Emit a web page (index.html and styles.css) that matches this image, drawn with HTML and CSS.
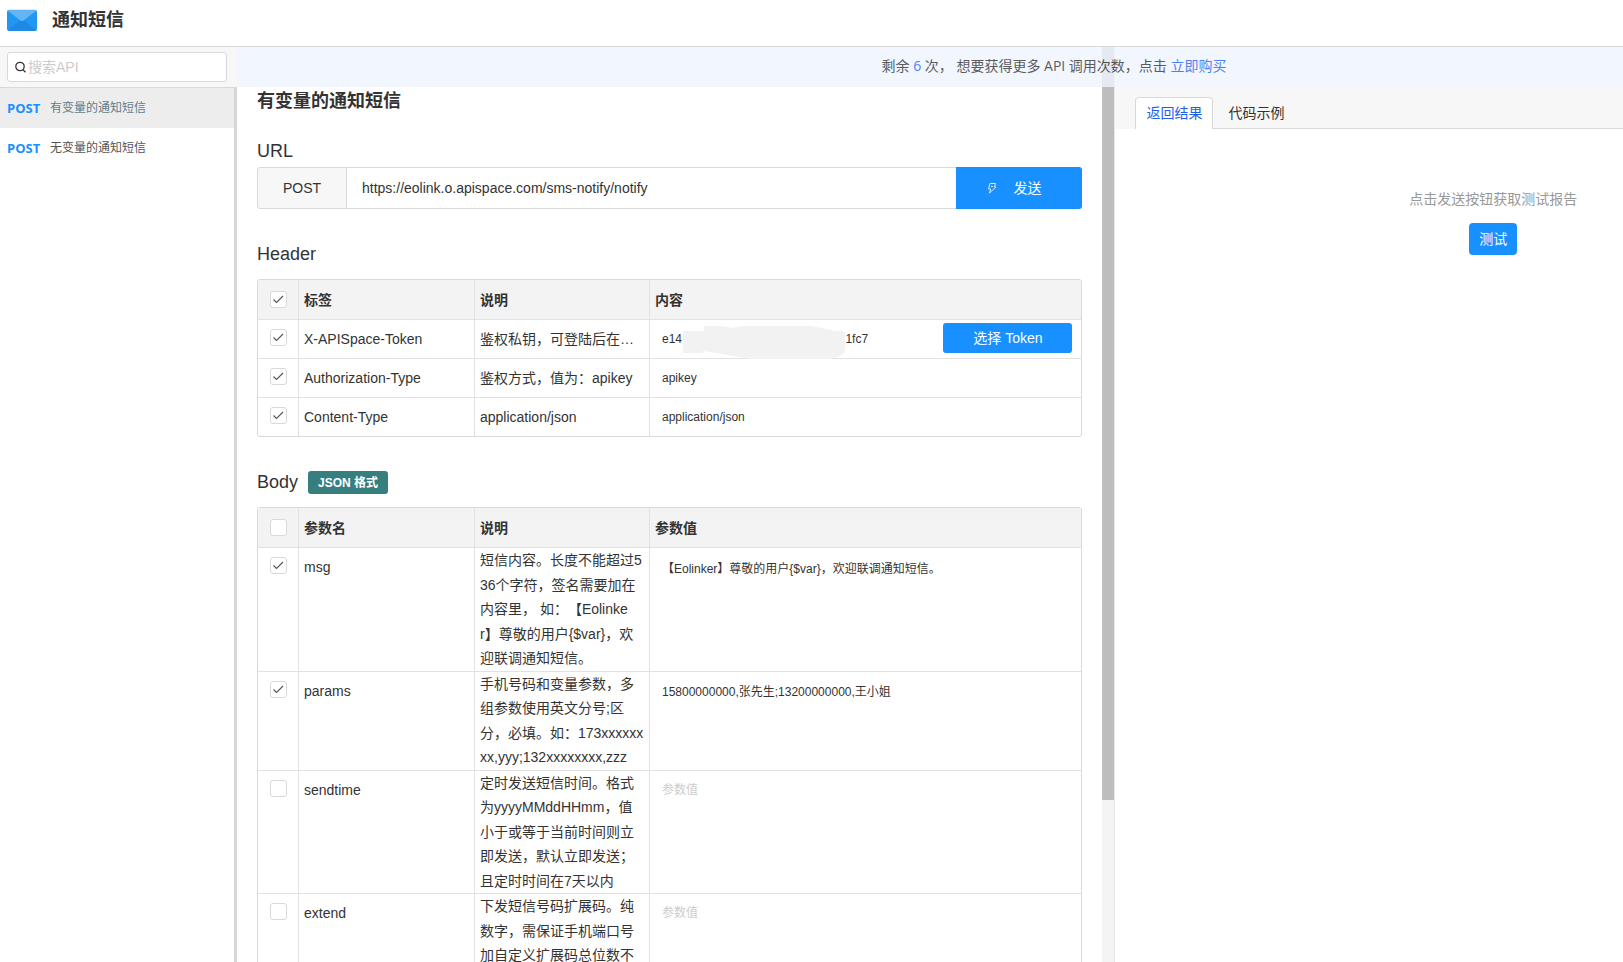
FILE: index.html
```html
<!DOCTYPE html>
<html lang="zh-CN">
<head>
<meta charset="utf-8">
<title>通知短信</title>
<link rel="stylesheet" href="styles.css">
</head>
<body>
<header class="topbar">
  <svg class="logo" width="30" height="22" viewBox="0 0 30 22" aria-hidden="true">
    <rect width="30" height="21" y="1" rx="2" fill="#2196f3"/>
    <path d="M1 21 15 10l14 11q-.4.8-1.500.8h-25Q1.400 21.800 1 21z" fill="#1e88e5"/>
    <path d="M.5 1.500Q1 .7 2 .7h26q1 0 1.500.8L16.500 11.500q-1.500 1-3 0z" fill="#64b5f6"/>
  </svg>
  <h1 class="app-title">通知短信</h1>
</header>
<div class="layout">
  <aside class="sidebar">
    <div class="search">
      <label class="search-box">
        <svg width="11" height="12" viewBox="0 0 11 12" fill="none" stroke="#333" stroke-width="1.300" aria-hidden="true"><circle cx="5" cy="5.500" r="4.200"/><path d="m8 8.700 2.500 2.500"/></svg>
        <input class="search-input" type="text" placeholder="搜索API" aria-label="搜索API">
      </label>
    </div>
    <nav class="api-list">
      <a class="api-item active" href="#"><b class="method">POST</b><span>有变量的通知短信</span></a>
      <a class="api-item" href="#"><b class="method">POST</b><span>无变量的通知短信</span></a>
    </nav>
  </aside>
  <div class="workspace">
    <p class="notice">剩余 <a href="#">6</a> 次， 想要获得更多 API 调用次数，点击 <a href="#">立即购买</a></p>
    <main class="main">
      <div class="content">
        <h2 class="api-title">有变量的通知短信</h2>
        <h3 class="section-title">URL</h3>
        <form class="url-bar">
          <span class="url-method">POST</span>
          <input class="url-input" type="text" aria-label="URL" value="https://eolink.o.apispace.com/sms-notify/notify">
          <button class="send" type="button">
            <svg width="10" height="12" viewBox="0 0 10 12" fill="none" stroke="#fff" stroke-opacity=".8" aria-hidden="true"><path d="M3 1.500h5.500L7.500 5H9L2.500 11l1.200-4H1.500z"/><path d="M4 4.500h2"/></svg>
            <span>发送</span>
          </button>
        </form>
        <h3 class="section-title">Header</h3>
        <div class="table-box">
          <table class="params">
            <colgroup><col class="c-check"><col class="c-name"><col class="c-desc"><col></colgroup>
            <thead>
              <tr><th><input type="checkbox" aria-label="全选" checked></th><th>标签</th><th>说明</th><th>内容</th></tr>
            </thead>
            <tbody>
              <tr>
                <td><input type="checkbox" aria-label="X-APISpace-Token" checked></td>
                <td class="name">X-APISpace-Token</td>
                <td class="desc single">鉴权私钥，可登陆后在管理后台获取</td>
                <td>
                  <div class="token">
                    <input class="value" type="text" aria-label="X-APISpace-Token 内容" value="e14&nbsp;&nbsp;&nbsp;&nbsp;&nbsp;&nbsp;&nbsp;&nbsp;&nbsp;&nbsp;&nbsp;&nbsp;&nbsp;&nbsp;&nbsp;&nbsp;&nbsp;&nbsp;&nbsp;&nbsp;&nbsp;&nbsp;&nbsp;&nbsp;&nbsp;&nbsp;&nbsp;&nbsp;&nbsp;&nbsp;&nbsp;&nbsp;&nbsp;&nbsp;&nbsp;&nbsp;&nbsp;&nbsp;&nbsp;&nbsp;&nbsp;&nbsp;&nbsp;&nbsp;&nbsp;&nbsp;&nbsp;&nbsp;&nbsp;1fc7">
                    <svg class="mask" width="162" height="33" viewBox="0 0 162 33" aria-hidden="true"><path fill="#f2f2f2" d="M0 5h21V0h18l10 2 13-2h66l15 3 9 2h8l2 2v19l-5 4-9 3H67l-17-3-17-3-13-2v2H0z"/></svg>
                    <button class="pick" type="button">选择 Token</button>
                  </div>
                </td>
              </tr>
              <tr>
                <td><input type="checkbox" aria-label="Authorization-Type" checked></td>
                <td class="name">Authorization-Type</td>
                <td class="desc single">鉴权方式，值为：apikey</td>
                <td><input class="value" type="text" aria-label="Authorization-Type 内容" value="apikey"></td>
              </tr>
              <tr>
                <td><input type="checkbox" aria-label="Content-Type" checked></td>
                <td class="name">Content-Type</td>
                <td class="desc single">application/json</td>
                <td><input class="value" type="text" aria-label="Content-Type 内容" value="application/json"></td>
              </tr>
            </tbody>
          </table>
        </div>
        <h3 class="section-title">Body <span class="badge">JSON 格式</span></h3>
        <div class="table-box">
          <table class="params">
            <colgroup><col class="c-check"><col class="c-name"><col class="c-desc"><col></colgroup>
            <thead>
              <tr><th><input type="checkbox" aria-label="全选"></th><th>参数名</th><th>说明</th><th>参数值</th></tr>
            </thead>
            <tbody>
              <tr>
                <td><input type="checkbox" aria-label="msg" checked></td>
                <td class="name">msg</td>
                <td class="desc">短信内容。长度不能超过536个字符，签名需要加在内容里， 如：【Eolinker】尊敬的用户{$var}，欢迎联调通知短信。</td>
                <td><input class="value" type="text" aria-label="msg 参数值" value="【Eolinker】尊敬的用户{$var}，欢迎联调通知短信。"></td>
              </tr>
              <tr>
                <td><input type="checkbox" aria-label="params" checked></td>
                <td class="name">params</td>
                <td class="desc">手机号码和变量参数，多组参数使用英文分号;区分，必填。如：173xxxxxxxx,yyy;132xxxxxxxx,zzz</td>
                <td><input class="value" type="text" aria-label="params 参数值" value="15800000000,张先生;13200000000,王小姐"></td>
              </tr>
              <tr>
                <td><input type="checkbox" aria-label="sendtime"></td>
                <td class="name">sendtime</td>
                <td class="desc">定时发送短信时间。格式为yyyyMMddHHmm，值小于或等于当前时间则立即发送，默认立即发送；且定时时间在7天以内</td>
                <td><input class="value" type="text" aria-label="sendtime 参数值" placeholder="参数值"></td>
              </tr>
              <tr>
                <td><input type="checkbox" aria-label="extend"></td>
                <td class="name">extend</td>
                <td class="desc">下发短信号码扩展码。纯数字，需保证手机端口号加自定义扩展码总位数不超过20位</td>
                <td><input class="value" type="text" aria-label="extend 参数值" placeholder="参数值"></td>
              </tr>
            </tbody>
          </table>
        </div>
      </div>
      <div class="scrollbar"><div class="thumb"></div></div>
    </main>
    <section class="panel">
      <div class="tabs" role="tablist">
        <button class="tab selected" type="button" role="tab" aria-selected="true">返回结果</button>
        <button class="tab" type="button" role="tab" aria-selected="false">代码示例</button>
        <span class="tabs-rest"></span>
      </div>
      <div class="empty">
        <p class="empty-text">点击发送按钮获取测试报告</p>
        <button class="test" type="button">测试</button>
      </div>
    </section>
  </div>
</div>
</body>
</html>
```

FILE: styles.css
```css
* {
  box-sizing: border-box;
}

body {
  margin: 0;
  height: 100vh;
  display: flex;
  flex-direction: column;
  overflow: hidden;
  background: #fff;
  color: #333;
  font: 14px/20px "Liberation Sans", "Noto Sans CJK SC", sans-serif;
  text-spacing-trim: space-all;
}

h1,
h2,
h3,
p {
  margin: 0;
}

a {
  text-decoration: none;
}

button,
input {
  font: inherit;
  color: inherit;
  margin: 0;
}

button {
  border: 0;
  padding: 0;
}

.topbar {
  flex: none;
  display: flex;
  align-items: center;
  gap: 15px;
  height: 47px;
  padding: 0 7px 6px;
  border-bottom: 1px solid #d9d9d9;
}

.app-title {
  font-size: 18px;
  line-height: 24px;
}

.layout {
  flex: 1;
  min-height: 0;
  display: flex;
  overflow: hidden;
}

/* Sidebar */
.sidebar {
  flex: none;
  width: 237px;
  display: flex;
  flex-direction: column;
}

.search {
  height: 41px;
  padding: 5px 10px 5px 7px;
  background: #f7f7f7;
  border-bottom: 1px solid #d9d9d9;
}

.search-box {
  display: flex;
  align-items: center;
  gap: 2px;
  height: 30px;
  padding-left: 7px;
  background: #fff;
  border: 1px solid #d9d9d9;
  border-radius: 3px;
}

.search-input {
  flex: 1;
  min-width: 0;
  height: 28px;
  padding: 0;
  border: 0;
  outline: 0;
  background: none;
}

::placeholder {
  color: #ccc;
  opacity: 1;
}

.api-list {
  flex: 1;
  border-right: 3px solid #d6d6d6;
}

.api-item {
  display: flex;
  align-items: center;
  gap: 10px;
  height: 40px;
  padding-left: 7px;
  font-size: 12px;
  color: #555;
}

.api-item.active {
  background: #ededed;
  color: #607d8b;
}

.method {
  width: 33px;
  color: #1890ff;
  font-size: 13px;
  font-family: "Open Sans", "Noto Sans", sans-serif;
}

/* Workspace */
.workspace {
  position: relative;
  flex: none;
  display: flex;
  width: calc(100% + 11px);
}

.notice {
  position: absolute;
  top: 0;
  left: 0;
  right: 0;
  z-index: 1;
  padding: 9px 0 11px;
  background: #eff4ff;
  opacity: 0.8;
  text-align: center;
  font-family: "Open Sans", "Noto Sans CJK SC", sans-serif;
}

.notice a {
  color: #1d63f0;
}

.main {
  flex: 878 1 0;
  min-width: 0;
  display: flex;
  border-right: 1px solid #e8e8e8;
}

.content {
  flex: 1;
  min-width: 0;
  padding: 41px 20px 0;
  overflow: hidden;
}

.scrollbar {
  flex: none;
  width: 12px;
  background: #f4f4f4;
}

.thumb {
  height: 82.3%;
  background: #bdbdbd;
}

.api-title {
  font-size: 18px;
  line-height: 26px;
  margin-bottom: 24px;
}

.section-title {
  display: flex;
  align-items: center;
  gap: 10px;
  height: 26px;
  font-size: 18px;
  line-height: 26px;
  font-weight: 400;
}

.badge {
  padding: 2px 10px 1px;
  border-radius: 3px;
  background: #377f7e;
  color: #fff;
  font-size: 12px;
  line-height: 20px;
  font-weight: 700;
}

.url-bar {
  display: flex;
  height: 42px;
  margin: 3px 0 32px;
}

.url-method {
  width: 90px;
  line-height: 40px;
  text-align: center;
  background: #f7f7f7;
  border: 1px solid #d9d9d9;
  border-radius: 3px 0 0 3px;
}

.url-input {
  flex: 1;
  min-width: 0;
  padding: 0 15px;
  border: 1px solid #d9d9d9;
  border-width: 1px 0;
  outline: 0;
}

.send {
  display: flex;
  align-items: center;
  justify-content: center;
  gap: 16px;
  width: 126px;
  padding-right: 10px;
  background: #1890ff;
  color: #fff;
  border-radius: 0 3px 3px 0;
}

/* Parameter tables */
.table-box {
  margin: 12px 0 32px;
  border: 1px solid #d9d9d9;
  border-radius: 3px;
  overflow: hidden;
}

.params {
  width: 100%;
  table-layout: fixed;
  border-collapse: separate;
  border-spacing: 0;
}

.c-check {
  width: 41px;
}

.c-name {
  width: 176px;
}

.c-desc {
  width: 175px;
}

.params th {
  height: 40px;
  padding: 0 5px;
  background: #f3f3f3;
  border: 0 solid #e2e2e2;
  border-width: 0 1px 1px 0;
  text-align: left;
  vertical-align: middle;
}

.params td {
  height: 39px;
  padding: 0;
  border: 0 solid #e2e2e2;
  border-width: 0 1px 1px 0;
  vertical-align: top;
}

.params th:last-child,
.params td:last-child {
  border-right: 0;
}

.params tr:last-child td {
  height: 38px;
  border-bottom: 0;
}

.params th:first-child {
  padding: 0 12px;
}

.params td:first-child {
  padding: 9px 12px 0;
}

.params .name {
  padding: 0 5px;
  line-height: 38px;
}

.params .desc {
  padding: 0 5px;
  line-height: 1.75;
  word-break: break-all;
}

.params .single {
  line-height: 38px;
  white-space: nowrap;
  overflow: hidden;
  text-overflow: ellipsis;
}

input[type="checkbox"] {
  appearance: none;
  display: block;
  width: 17px;
  height: 17px;
  background: #fff;
  border: 1px solid #d9d9d9;
  border-radius: 3px;
}

input[type="checkbox"]:checked {
  background: #fff url("data:image/svg+xml,%3Csvg xmlns='http://www.w3.org/2000/svg' width='15' height='15' fill='none' stroke='%23555' stroke-width='1.1'%3E%3Cpath d='m2.500 7.500 3 3 6.500-6.500'/%3E%3C/svg%3E") no-repeat;
}

.value {
  display: block;
  width: 100%;
  height: 38px;
  padding: 0 12px;
  border: 0;
  outline: 0;
  background: none;
  font-size: 12px;
}

.token {
  position: relative;
  display: flex;
  height: 38px;
  padding-right: 9px;
}

.token .value {
  flex: 1;
  min-width: 0;
}

.mask {
  position: absolute;
  left: 33px;
  top: 6px;
}

.pick {
  flex: none;
  width: 129px;
  height: 30px;
  margin-top: 3px;
  background: #1890ff;
  color: #fff;
  border-radius: 3px;
}

/* Result panel */
.panel {
  flex: 756 1 0;
  min-width: 0;
  padding-top: 40px;
}

.tabs {
  display: flex;
  height: 42px;
  padding: 10px 0 0 20px;
  background: #f7f7f7;
}

.tab {
  padding: 0 14px 0 15px;
  background: none;
  border-bottom: 1px solid #d9d9d9;
}

.tab.selected {
  padding: 0 10px 1px;
  background: #fff;
  border: 1px solid #d9d9d9;
  border-bottom: 0;
  border-radius: 4px 4px 0 0;
  color: #1f5fef;
}

.tabs-rest {
  flex: 1;
  border-bottom: 1px solid #d9d9d9;
}

.empty {
  display: flex;
  flex-direction: column;
  align-items: center;
  gap: 14px;
  padding-top: 60px;
}

.empty-text {
  color: #999;
}

.test {
  width: 48px;
  height: 32px;
  background: #1890ff;
  color: #fff;
  border-radius: 4px;
}
```
